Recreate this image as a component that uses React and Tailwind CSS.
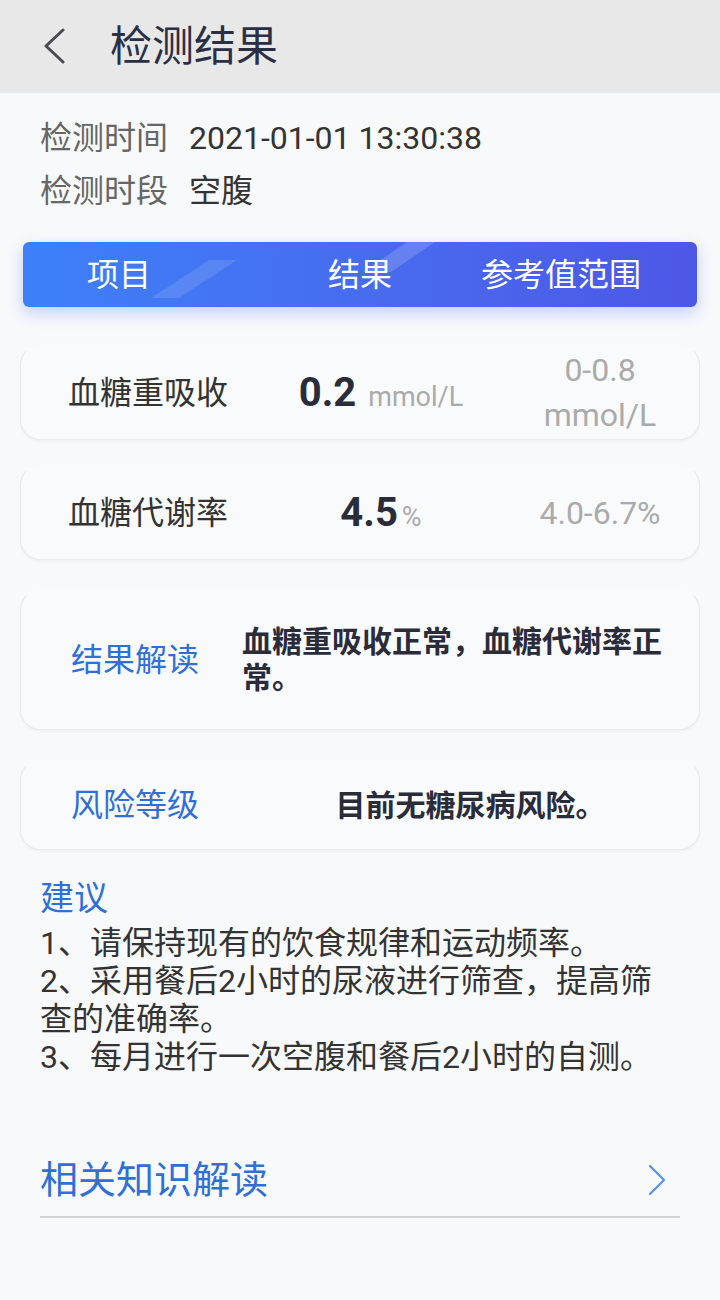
import React from "react";

const font = "font-['Roboto','Noto_Sans_CJK_SC',sans-serif]";

const Card = ({ className = "", children }) => (
  <div
    className={`mx-5 rounded-[20px] border border-[#e9e9eb] border-t-transparent bg-[#f9fafc] shadow-[0_2px_3px_rgba(0,0,0,0.03)] ${className}`}
  >
    {children}
  </div>
);

export default function App() {
  const tips = [
    "1、请保持现有的饮食规律和运动频率。",
    "2、采用餐后2小时的尿液进行筛查，提高筛查的准确率。",
    "3、每月进行一次空腹和餐后2小时的自测。",
  ];

  return (
    <div className={`${font} min-h-[1300px] w-[720px] bg-[#f8f9fb] text-[#333]`}>
      {/* Header */}
      <div className="flex h-[93px] items-center bg-[#e8e8e8] pl-[42px]">
        <svg width="24" height="36" viewBox="0 0 24 36" className="mt-[-2px]">
          <polyline points="21,2 4,18 21,34" fill="none" stroke="#4a4a52" strokeWidth="3" strokeLinecap="round" strokeLinejoin="round" />
        </svg>
        <h1 className="ml-[44px] text-[42px] leading-none text-[#2b2f45]">检测结果</h1>
      </div>

      {/* Info */}
      <div className="px-10 pt-[18px] text-[32px]">
        <div className="flex h-[53px] items-center">
          <span className="w-[128px] text-[#666]">检测时间</span>
          <span className="ml-[21px] text-[#333]">2021-01-01 13:30:38</span>
        </div>
        <div className="flex h-[53px] items-center">
          <span className="w-[128px] text-[#666]">检测时段</span>
          <span className="ml-[21px] text-[#333]">空腹</span>
        </div>
      </div>

      {/* Table head */}
      <div className="relative mx-[23px] mt-[25px] flex h-[65px] items-center overflow-hidden rounded-[6px] bg-gradient-to-r from-[#3d80f7] to-[#4d57e6] pl-[64px] text-[32px] text-white shadow-[0_6px_16px_rgba(60,100,240,0.28)]">
        <svg className="absolute inset-0" width="674" height="65" viewBox="0 0 674 65">
          <polygon points="128,56 156,56 214,18 186,18" fill="#ffffff" opacity="0.12" />
          <polygon points="340,30 368,30 412,0 384,0" fill="#ffffff" opacity="0.16" />
        </svg>
        <span className="relative w-[64px] leading-none">项目</span>
        <span className="relative ml-[177px] w-[64px] leading-none">结果</span>
        <span className="relative ml-[89px] leading-none">参考值范围</span>
      </div>

      {/* Result rows */}
      <Card className="mt-[38px] flex h-[95px] items-center pl-[47px]">
        <span className="w-[213px] text-[32px]">血糖重吸收</span>
        <div className="flex w-[200px] items-baseline justify-center">
          <span className="text-[40px] font-bold leading-none text-[#2a2c3a]">0.2</span>
          <span className="ml-3 text-[27px] leading-none text-[#aaa]">mmol/L</span>
        </div>
        <div className="flex-1 pl-5 text-center text-[32px] leading-[45px] text-[#aaa]">
          0-0.8
          <br />
          mmol/L
        </div>
      </Card>

      <Card className="mt-[25px] flex h-[95px] items-center pl-[47px]">
        <span className="w-[213px] text-[32px]">血糖代谢率</span>
        <div className="flex w-[200px] items-baseline justify-center">
          <span className="text-[40px] font-bold leading-none text-[#2a2c3a]">4.5</span>
          <span className="ml-1 text-[27px] leading-none text-[#aaa]">%</span>
        </div>
        <div className="flex-1 pl-5 text-center text-[32px] text-[#aaa]">4.0-6.7%</div>
      </Card>

      <Card className="mt-[30px] flex h-[140px] items-center pl-[50px]">
        <span className="w-[171px] text-[32px] text-[#2f6fd8]">结果解读</span>
        <p className="w-[430px] text-[30px] font-bold leading-[36px] text-[#2a2c3a]">
          血糖重吸收正常，血糖代谢率正常。
        </p>
      </Card>

      <Card className="mt-[30px] flex h-[90px] items-center pl-[50px]">
        <span className="w-[171px] text-[32px] text-[#2f6fd8]">风险等级</span>
        <p className="flex-1 text-center text-[30px] font-bold text-[#2a2c3a]">目前无糖尿病风险。</p>
      </Card>

      {/* Advice */}
      <div className="mx-10 mt-[26px]">
        <div className="text-[34px] leading-[44px] text-[#2f6fd8]">建议</div>
        <div className="mt-1 text-[32px] leading-[38px] text-[#333]">
          {tips.map((t) => (
            <p key={t}>{t}</p>
          ))}
        </div>
      </div>

      {/* Related */}
      <div className="mx-10 mt-[78px] flex items-center justify-between border-b-2 border-[#d4d4d6] pb-[10px]">
        <span className="text-[38px] leading-[52px] text-[#2f6fd8]">相关知识解读</span>
        <svg width="20" height="32" viewBox="0 0 20 32" className="mr-[13px]">
          <polyline points="3,2 17,16 3,30" fill="none" stroke="#5592ee" strokeWidth="2.2" strokeLinecap="round" strokeLinejoin="round" />
        </svg>
      </div>
    </div>
  );
}
